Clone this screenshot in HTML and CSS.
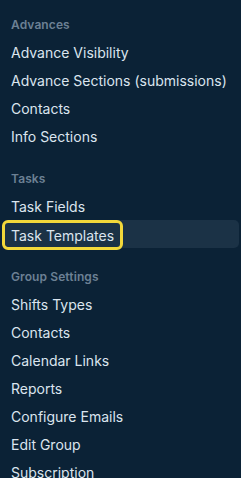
FILE: index.html
```html
<!DOCTYPE html>
<html lang="en">
<head>
<meta charset="utf-8">
<title>Settings</title>
<link rel="stylesheet" href="styles.css">
</head>
<body>
<nav class="sidebar">
  <section class="group">
    <h3 class="group-title">Advances</h3>
    <a class="item" href="#">Advance Visibility</a>
    <a class="item" href="#">Advance Sections (submissions)</a>
    <a class="item" href="#">Contacts</a>
    <a class="item" href="#">Info Sections</a>
  </section>
  <section class="group">
    <h3 class="group-title">Tasks</h3>
    <a class="item" href="#">Task Fields</a>
    <a class="item item-active" href="#"><span class="focus-ring">Task Templates</span></a>
  </section>
  <section class="group">
    <h3 class="group-title">Group Settings</h3>
    <a class="item" href="#">Shifts Types</a>
    <a class="item" href="#">Contacts</a>
    <a class="item" href="#">Calendar Links</a>
    <a class="item" href="#">Reports</a>
    <a class="item" href="#">Configure Emails</a>
    <a class="item" href="#">Edit Group</a>
    <a class="item" href="#">Subscription</a>
  </section>
</nav>
</body>
</html>
```
FILE: styles.css
```css
html, body {
  margin: 0;
  padding: 0;
  background: #0b2236;
  height: 100%;
  overflow: hidden;
}
body {
  font-family: Inter, "Noto Sans", sans-serif;
}
.sidebar {
  display: flex;
  flex-direction: column;
  gap: 14px;
  padding: 10px 2px 0 3px;
}
.group {
  display: flex;
  flex-direction: column;
}
.group-title {
  margin: 0;
  height: 28px;
  display: flex;
  align-items: center;
  padding-left: 8px;
  font-size: 12px;
  font-weight: 600;
  color: #6c8094;
  letter-spacing: 0.1px;
}
.item {
  height: 28px;
  display: flex;
  align-items: center;
  padding-left: 8px;
  font-size: 14px;
  color: #dbe5ef;
  text-decoration: none;
  border-radius: 5px;
}
.item-active {
  background: #1b3246;
  padding-left: 0;
}
.focus-ring {
  display: flex;
  align-items: center;
  height: 30px;
  box-sizing: border-box;
  margin: 1px 0 -1px -1px;
  padding: 0 6px 0 6px;
  border: 3px solid #f2d83a;
  border-radius: 6px;
}
```
